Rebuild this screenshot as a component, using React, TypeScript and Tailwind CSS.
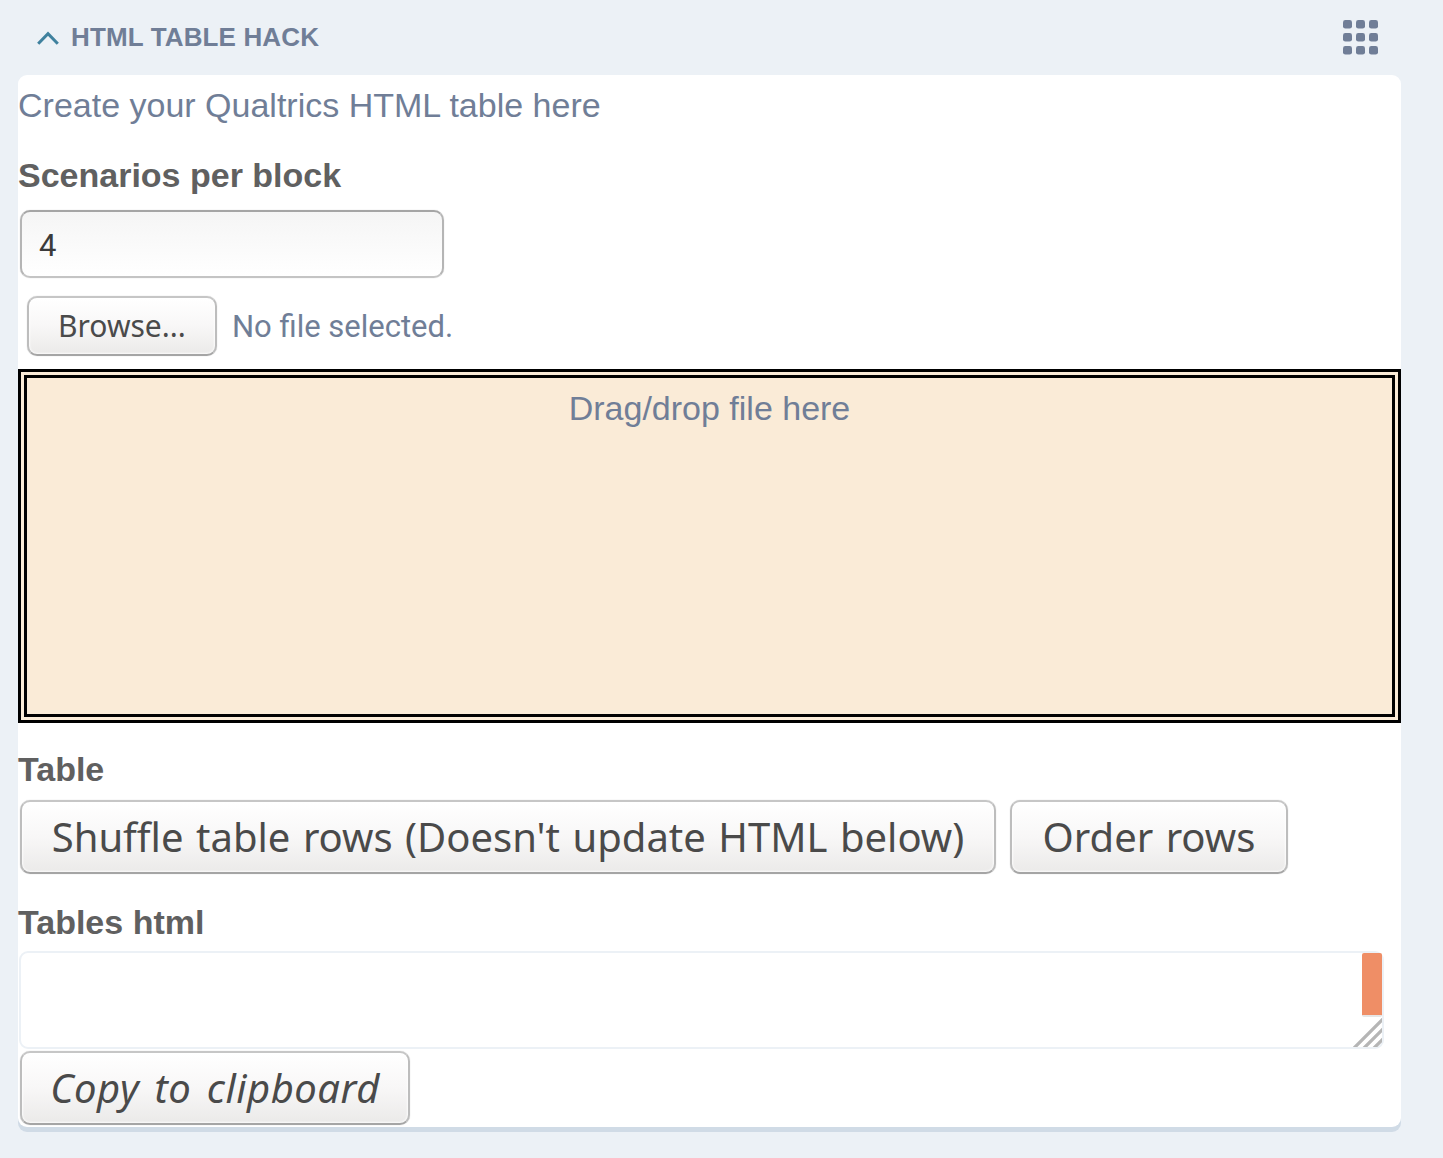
import React from "react";

const buttonBase =
  "flex shrink-0 items-center justify-center whitespace-nowrap rounded-[10px] border-2 border-t-[#c6c6c6] border-x-[#bdbdbd] border-b-[#a5a5a5] bg-linear-to-b from-white via-[#f8f7f7] to-[#ebeae9] text-[#4a4a4a] shadow-[inset_0_0_2px_1px_rgba(255,255,255,0.8),0_0_1px_rgba(0,0,0,0.25)]";

function GridIcon() {
  const steps = [0, 13, 26];
  return (
    <svg width="36" height="35" viewBox="0 0 36 35" fill="#707e97">
      {steps.map((y) =>
        steps.map((x) => <rect key={`${x}-${y}`} x={x} y={y} width="9" height="8.6" rx="2.4" />)
      )}
    </svg>
  );
}

export default function App() {
  return (
    <div className="flex h-[1158px] w-[1443px] flex-col bg-[#ecf1f6] font-['Liberation_Sans',Arial,sans-serif] text-[#707e97]">
      <header className="flex h-[75px] shrink-0 items-center justify-between pl-[37px] pr-[64px]">
        <div className="flex items-center gap-3">
          <svg width="22" height="14" viewBox="0 0 22 14" fill="none" className="mt-[1px]">
            <path d="M1.2 12.8L11 2.6L20.8 12.8" stroke="#3f819e" strokeWidth="3" />
          </svg>
          <h1 className="-mt-[2px] text-[26px] font-bold leading-[30px] tracking-[0.14px]">HTML TABLE HACK</h1>
        </div>
        <GridIcon />
      </header>

      <main className="ml-[18px] flex h-[1052px] w-[1383px] shrink-0 flex-col rounded-[9px] bg-white shadow-[0_5px_0_#d0dbe6]">
        <p className="mt-[10px] h-10 text-[34px] leading-10">Create your Qualtrics HTML table here</p>
        <h2 className="mt-[30px] h-10 text-[34px] font-bold leading-10 text-[#606060]">Scenarios per block</h2>
        <input
          defaultValue="4"
          className="ml-[2px] mt-[15px] h-[68px] w-[424px] shrink-0 rounded-[10px] border-2 border-t-[#a5a5a5] border-x-[#b5b5b5] border-b-[#c4c4c4] bg-linear-to-b from-[#f5f5f5] to-white px-[17px] pt-[2px] font-[Roboto,sans-serif] text-[31px] text-[#3b3b3b] shadow-[0_0_1px_rgba(0,0,0,0.25)] outline-none"
        />
        <div className="ml-[9px] mt-[18px] flex h-[60px] shrink-0 items-center gap-[15px]">
          <button className={`${buttonBase} h-[60px] w-[190px] pb-[2px] font-['Noto_Sans',sans-serif] text-[30px]`}>Browse...</button>
          <span className="pt-[2px] font-[Roboto,sans-serif] text-[31px]">No file selected.</span>
        </div>
        <div className="mt-[13px] h-[354px] shrink-0 border-[9px] border-double border-black bg-[#faebd7] pt-[10px] text-center text-[34px] leading-10">
          Drag/drop file here
        </div>
        <h2 className="mt-[26px] h-10 text-[34px] font-bold leading-10 text-[#606060]">Table</h2>
        <div className="ml-[2px] mt-[11px] flex h-[74px] shrink-0 gap-[14px] font-['Noto_Sans',sans-serif] text-[40px]">
          <button className={`${buttonBase} w-[976px] [word-spacing:2.1px]`}>Shuffle table rows (Doesn't update HTML below)</button>
          <button className={`${buttonBase} w-[278px] [word-spacing:2px]`}>Order rows</button>
        </div>
        <h2 className="mt-[28px] h-10 text-[34px] font-bold leading-10 text-[#606060]">Tables html</h2>
        <div className="ml-px mt-[9px] flex h-[98px] w-[1365px] shrink-0 flex-col items-end justify-between rounded-[9px] border-2 border-[#ecf1f6]">
          <div className="h-[64px] w-[20px] rounded-[2px] border-b-2 border-[#e6e6e6] bg-[#ef8e66]" />
          <svg width="29" height="29" viewBox="0 0 29 29" stroke="#b5b5b5" strokeWidth="3.3">
            <path d="M0 31L31 0M10 31L31 10M20 31L31 20" />
          </svg>
        </div>
        <button className={`${buttonBase} ml-[2px] mt-[2px] h-[74px] w-[390px] font-['Noto_Sans',sans-serif] text-[40px] italic tracking-[0.5px] [word-spacing:4.5px]`}>
          Copy to clipboard
        </button>
      </main>
    </div>
  );
}
